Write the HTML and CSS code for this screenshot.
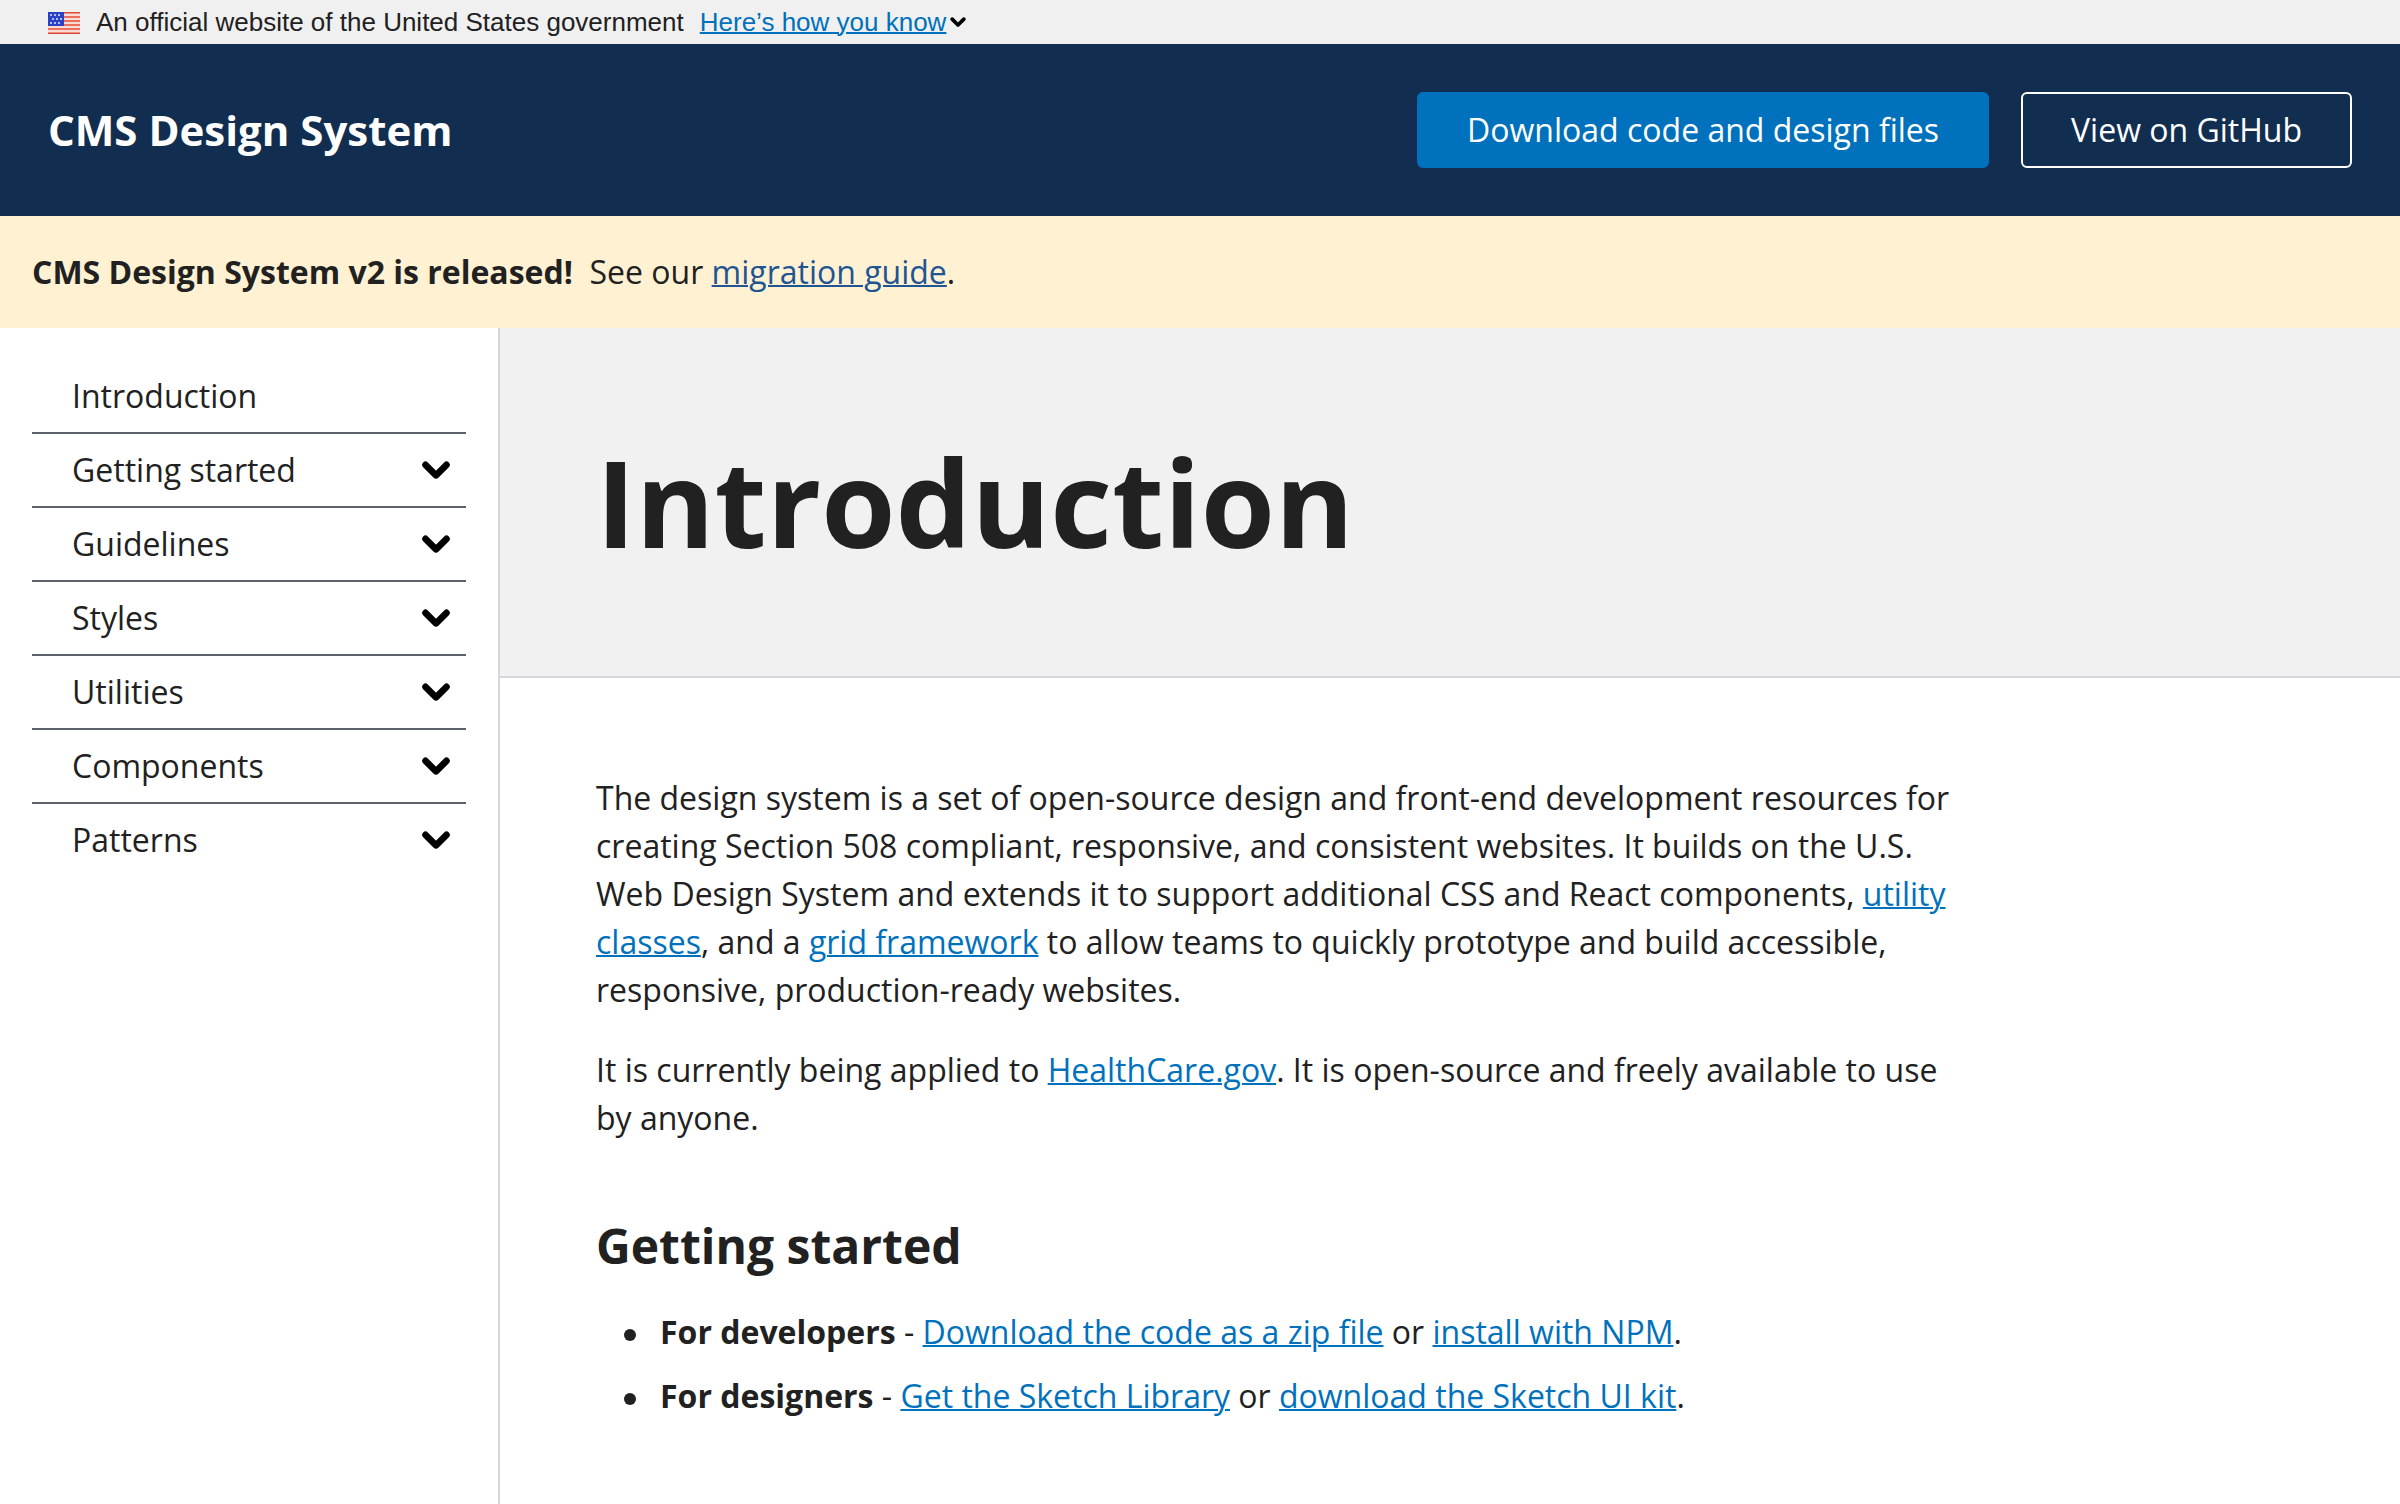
FILE: index.html
```html
<!DOCTYPE html>
<html lang="en">
<head>
<meta charset="utf-8">
<title>Introduction - CMS Design System</title>
<meta name="viewport" content="width=device-width, initial-scale=1">
<link rel="stylesheet" href="styles.css">
</head>
<body>
<svg class="sprite" aria-hidden="true">
  <symbol id="chevron" viewBox="0 0 28 18">
    <path d="M3.5 3.8 14 14.3 24.5 3.8" fill="none" stroke="#000" stroke-width="6.6" stroke-linecap="round" stroke-linejoin="round"/>
  </symbol>
</svg>

<div class="gov-banner">
  <svg class="flag" viewBox="0 0 32 22" role="img" aria-label="U.S. flag">
    <path fill="#fbdcd5" d="M0 0h32v22H0z"/>
    <path fill="#e8705e" d="M0 4h32v2H0zM0 8h32v2H0zM0 12h32v2H0zM0 16h32v2H0z"/>
    <path fill="#dd4a33" d="M0 0h32v1H0zM0 21h32v1H0z"/>
    <path fill="#ee8f80" d="M0 1h32v1H0zM0 20h32v1H0z"/>
    <path fill="#2a41c4" d="M0 0h16v14H0z"/>
    <path fill="#b3bbec" d="M2 2h2v2H2zM6 2h2v2H6zM10 2h2v2h-2zM4 6h2v2H4zM8 6h2v2H8zM12 6h2v2h-2zM2 10h2v2H2zM6 10h2v2H6zM10 10h2v2h-2z"/>
  </svg>
  <span class="gov-text">An official website of the United States government</span>
  <button class="gov-toggle" type="button"><span class="gov-label">Here’s how you know</span><svg class="chevron-small" aria-hidden="true"><use href="#chevron"/></svg></button>
</div>

<header class="header">
  <a class="brand" href="#">CMS Design System</a>
  <div class="actions">
    <a class="button button-primary" href="#">Download code and design files</a>
    <a class="button button-outline" href="#">View on GitHub</a>
  </div>
</header>

<div class="alert"><strong>CMS Design System v2 is released!</strong>&nbsp; See our <a class="alert-link" href="#">migration guide</a>.</div>

<div class="layout">
  <nav class="sidebar" aria-label="Documentation">
    <ul class="nav">
      <li class="nav-item"><a class="nav-row" href="#">Introduction</a></li>
      <li class="nav-item"><button class="nav-row" type="button">Getting started<svg class="chevron" aria-hidden="true"><use href="#chevron"/></svg></button></li>
      <li class="nav-item"><button class="nav-row" type="button">Guidelines<svg class="chevron" aria-hidden="true"><use href="#chevron"/></svg></button></li>
      <li class="nav-item"><button class="nav-row" type="button">Styles<svg class="chevron" aria-hidden="true"><use href="#chevron"/></svg></button></li>
      <li class="nav-item"><button class="nav-row" type="button">Utilities<svg class="chevron" aria-hidden="true"><use href="#chevron"/></svg></button></li>
      <li class="nav-item"><button class="nav-row" type="button">Components<svg class="chevron" aria-hidden="true"><use href="#chevron"/></svg></button></li>
      <li class="nav-item"><button class="nav-row" type="button">Patterns<svg class="chevron" aria-hidden="true"><use href="#chevron"/></svg></button></li>
    </ul>
  </nav>
  <main class="main">
    <div class="hero"><h1 class="title">Introduction</h1></div>
    <div class="content">
      <p class="text">The design system is a set of open-source design and front-end development resources for creating Section 508 compliant, responsive, and consistent websites. It builds on the U.S. Web Design System and extends it to support additional CSS and React components, <a href="#">utility classes</a>, and a <a href="#">grid framework</a> to allow teams to quickly prototype and build accessible, responsive, production-ready websites.</p>
      <p class="text">It is currently being applied to <a href="#">HealthCare.gov</a>. It is open-source and freely available to use by anyone.</p>
      <h2 class="heading">Getting started</h2>
      <ul class="list">
        <li class="list-item"><strong>For developers</strong> - <a href="#">Download the code as a zip file</a> or <a href="#">install with NPM</a>.</li>
        <li class="list-item"><strong>For designers</strong> - <a href="#">Get the Sketch Library</a> or <a href="#">download the Sketch UI kit</a>.</li>
      </ul>
    </div>
  </main>
</div>
</body>
</html>
```

FILE: styles.css
```css
* {
  box-sizing: border-box;
}

body {
  display: flex;
  flex-direction: column;
  min-height: 100vh;
  margin: 0;
  background: #fff;
  color: #212121;
  font-family: "Open Sans", sans-serif;
  font-size: 32px;
  line-height: 48px;
}

a {
  color: #0071bc;
  text-decoration-thickness: 2px;
}

button {
  padding: 0;
  border: 0;
  background: none;
  color: inherit;
  font: inherit;
  text-align: left;
  cursor: pointer;
}

.sprite {
  display: none;
}

.gov-banner {
  display: flex;
  align-items: center;
  min-height: 44px;
  padding: 0 48px;
  background: #f0f0f0;
  font-family: "Liberation Sans", Arial, sans-serif;
  font-size: 26px;
  line-height: 36px;
}

.flag {
  width: 32px;
  height: 22px;
  margin: 2px 16px 0 0;
}

.gov-text {
  margin-right: 16px;
}

.gov-toggle {
  display: flex;
  align-items: center;
  gap: 4px;
}

.gov-label {
  color: #0071bc;
  text-decoration: underline 2px;
}

.chevron-small {
  width: 16px;
  height: 10px;
}

.header {
  display: flex;
  align-items: center;
  justify-content: space-between;
  padding: 48px;
  background: #112e51;
}

.brand {
  color: #fff;
  font-size: 42px;
  font-weight: 700;
  text-decoration: none;
}

.actions {
  display: flex;
  gap: 32px;
}

.button {
  padding: 12px 48px;
  border: 2px solid;
  border-radius: 6px;
  color: #fff;
  text-decoration: none;
}

.button-primary {
  border-color: #0071bc;
  background: #0071bc;
}

.button-outline {
  border-color: #fff;
}

.alert {
  padding: 32px;
  background: #fff1d2;
}

.alert-link {
  color: #205493;
}

.layout {
  display: flex;
  flex: 1;
}

.sidebar {
  flex: none;
  width: 500px;
  padding: 32px;
  border-right: 2px solid #d6d7d9;
}

.nav {
  margin: 0;
  padding: 0;
  list-style: none;
}

.nav-item + .nav-item {
  border-top: 2px solid #5b616b;
}

.nav-row {
  display: flex;
  align-items: center;
  justify-content: space-between;
  width: 100%;
  padding: 12px 16px 12px 40px;
  color: #212121;
  text-decoration: none;
}

.chevron {
  width: 28px;
  height: 18px;
}

.main {
  flex: 1;
}

.hero {
  padding: 96px;
  border-bottom: 2px solid #d6d7d9;
  background: #f1f1f1;
}

.title {
  margin: 0;
  font-size: 120px;
  line-height: 156px;
}

.content {
  padding: 96px 96px 64px;
}

.text {
  max-width: 1368px;
  margin: 0 0 32px;
}

.heading {
  margin: 72px 0 30px;
  font-size: 48px;
  line-height: 64px;
}

.list {
  display: flex;
  flex-direction: column;
  gap: 16px;
  margin: 0;
  padding-left: 64px;
  list-style: none;
}

/* Round bullet hanging in the list's left padding */
.list-item::before {
  content: "";
  display: inline-block;
  width: 12px;
  height: 12px;
  margin: 0 24px 0 -36px;
  border-radius: 50%;
  background: #212121;
  vertical-align: middle;
}
```
